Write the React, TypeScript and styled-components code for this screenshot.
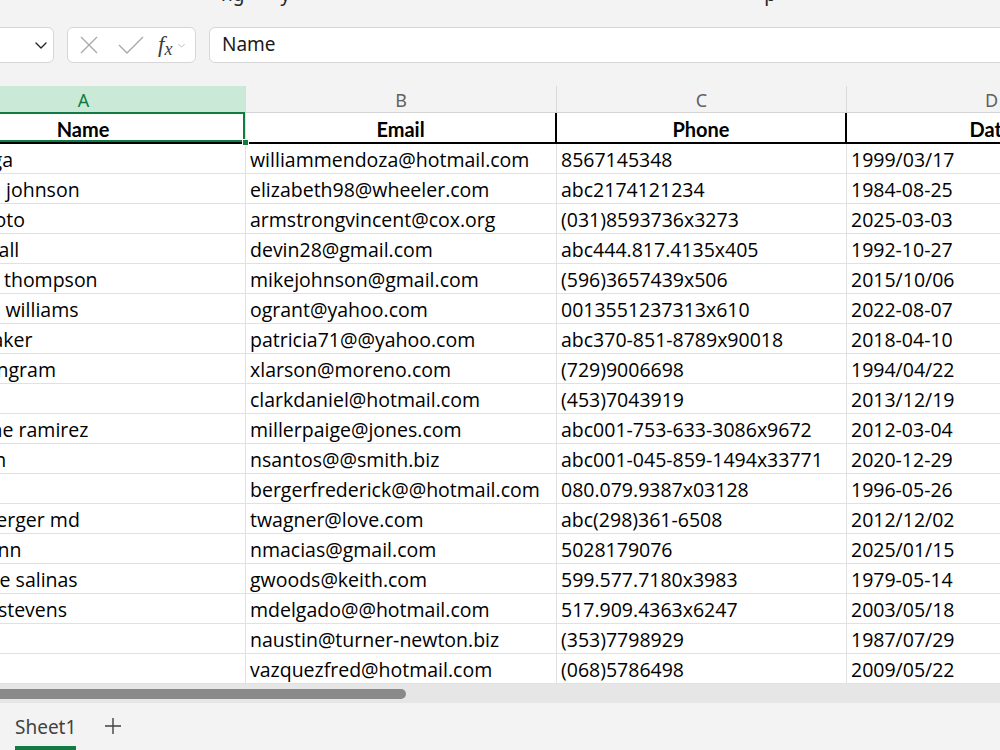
import React from 'react'
import styled, { createGlobalStyle } from 'styled-components'

const GlobalStyle = createGlobalStyle`
  * { box-sizing: border-box; }
  html, body { margin: 0; padding: 0; background: #f3f3f3; overflow: hidden; }
  #root { width: 1000px; height: 750px; }
`

const COLS = '324px 311px 290px 290px'

const Page = styled.div`
  width: 1000px;
  height: 750px;
  display: flex;
  flex-direction: column;
  background: #f3f3f3;
  overflow: hidden;
`

// message line above the view, only its descenders remain visible
const TopStrip = styled.div`
  height: 27px;
  overflow: hidden;
  display: flex;
  align-items: flex-start;
  font-family: 'Noto Sans', sans-serif;
  font-size: 19px;
  color: #242424;
`

const Fragment = styled.span<{ $gap: number }>`
  margin-left: ${p => p.$gap}px;
  margin-top: -16px;
  line-height: 20px;
  white-space: nowrap;
`

const FormulaBar = styled.div`
  height: 36px;
  display: flex;
  gap: 13px;
  margin-bottom: 23px;
`

const NameBox = styled.div`
  width: 120px;
  margin-left: -66px;
  border: 1px solid #d6d6d6;
  border-radius: 6px;
  background: #fff;
  display: flex;
  align-items: center;
  justify-content: flex-end;
  padding-right: 4px;
`

const FxGroup = styled.div`
  width: 129px;
  border: 1px solid #d6d6d6;
  border-radius: 6px;
  background: #fff;
  display: flex;
  align-items: center;
  padding-left: 11px;
`

const FxLabel = styled.span`
  font-family: 'Liberation Serif', serif;
  font-style: italic;
  font-size: 23px;
  color: #3b3b3b;
  margin-left: 13px;
  line-height: 1;
  sub {
    font-size: 18px;
    vertical-align: -3px;
  }
`

const FxCaret = styled.span`
  display: flex;
  margin-left: 5px;
`

const FormulaInput = styled.div`
  flex: 1;
  margin-right: -20px;
  border: 1px solid #d6d6d6;
  border-radius: 6px;
  background: #fff;
  display: flex;
  align-items: center;
  padding: 0 0 2px 12px;
  font-family: 'Noto Sans', sans-serif;
  font-size: 19px;
  color: #1b1b1b;
`

const Sheet = styled.div`
  height: 598px;
  overflow: hidden;
  background: #fff;
`

const ColHeaderRow = styled.div`
  display: grid;
  grid-template-columns: ${COLS};
  margin-left: -78px;
  height: 27px;
  border-bottom: 1px solid #d4d4d4;
  background: #f3f3f3;
`

const ColHead = styled.div<{ $active?: boolean }>`
  display: flex;
  align-items: center;
  justify-content: center;
  border-right: 1px solid #dadada;
  background: ${p => (p.$active ? '#caead7' : '#f3f3f3')};
  color: ${p => (p.$active ? '#107c41' : '#616161')};
  font-family: 'Noto Sans', sans-serif;
  font-size: 18px;
  padding-top: 1px;
`

const Row = styled.div<{ $head?: boolean }>`
  display: grid;
  grid-template-columns: ${COLS};
  margin-left: -78px;
  height: ${p => (p.$head ? 31 : 30)}px;
`

const Cell = styled.div`
  display: flex;
  align-items: center;
  padding: 1px 4px 0;
  border-right: 1px solid #e1e1e1;
  border-bottom: 1px solid #e1e1e1;
  font-family: 'Open Sans', sans-serif;
  font-size: 19.5px;
  color: #000;
  white-space: nowrap;
  overflow: hidden;
`

const HeadCell = styled(Cell)`
  justify-content: center;
  padding-top: 3px;
  font-family: Lato, 'Open Sans', sans-serif;
  font-weight: 700;
  font-size: 20px;
  border-right: 2px solid #000;
  border-bottom: 2px solid #000;
  overflow: visible;
`

const SelectedCell = styled(HeadCell)`
  position: relative;
  border-right: 2px solid #e1e1e1;
  &::after {
    content: '';
    position: absolute;
    top: -1px;
    left: -2px;
    right: -1px;
    bottom: 0;
    border: 2px solid #107c41;
    pointer-events: none;
  }
`

const FillHandle = styled.span`
  position: absolute;
  right: -5px;
  bottom: -4px;
  width: 7px;
  height: 7px;
  background: #107c41;
  border: 1px solid #fff;
  z-index: 2;
`

const ScrollTrack = styled.div`
  height: 19px;
  background: #e6e6e6;
  padding-top: 5px;
`

const ScrollThumb = styled.div`
  width: 406px;
  height: 10px;
  border-radius: 0 5px 5px 0;
  background: #898989;
`

const TabBar = styled.div`
  flex: 1;
  display: flex;
  align-items: stretch;
  padding-left: 15px;
  gap: 28px;
`

const Tab = styled.div`
  display: flex;
  align-items: center;
  padding-top: 4px;
  border-bottom: 4px solid #107c41;
  font-family: 'Noto Sans', sans-serif;
  font-size: 19px;
  color: #424242;
`

const AddButton = styled.div`
  display: flex;
  align-items: center;
  padding-bottom: 1px;
`

const people = [
  ['rosa vega', 'williammendoza@hotmail.com', '8567145348', '1999/03/17'],
  ['kenneth johnson', 'elizabeth98@wheeler.com', 'abc2174121234', '1984-08-25'],
  ['carlos soto', 'armstrongvincent@cox.org', '(031)8593736x3273', '2025-03-03'],
  ['daniel hall', 'devin28@gmail.com', 'abc444.817.4135x405', '1992-10-27'],
  ['vanessa thompson', 'mikejohnson@gmail.com', '(596)3657439x506', '2015/10/06'],
  ['amanda williams', 'ogrant@yahoo.com', '0013551237313x610', '2022-08-07'],
  ['dylan baker', 'patricia71@@yahoo.com', 'abc370-851-8789x90018', '2018-04-10'],
  ['norma ingram', 'xlarson@moreno.com', '(729)9006698', '1994/04/22'],
  ['amy lee', 'clarkdaniel@hotmail.com', '(453)7043919', '2013/12/19'],
  ['marianne ramirez', 'millerpaige@jones.com', 'abc001-753-633-3086x9672', '2012-03-04'],
  ['eva allen', 'nsantos@@smith.biz', 'abc001-045-859-1494x33771', '2020-12-29'],
  ['lisa ray', 'bergerfrederick@@hotmail.com', '080.079.9387x03128', '1996-05-26'],
  ['susan berger md', 'twagner@love.com', 'abc(298)361-6508', '2012/12/02'],
  ['julie quinn', 'nmacias@gmail.com', '5028179076', '2025/01/15'],
  ['madeline salinas', 'gwoods@keith.com', '599.577.7180x3983', '1979-05-14'],
  ['monica stevens', 'mdelgado@@hotmail.com', '517.909.4363x6247', '2003/05/18'],
  ['eric fox', 'naustin@turner-newton.biz', '(353)7798929', '1987/07/29'],
  ['tom hill', 'vazquezfred@hotmail.com', '(068)5786498', '2009/05/22'],
]

const Chevron = ({ size, color }: { size: number; color: string }) => (
  <svg width={size} height={size} viewBox="0 0 16 16" fill="none">
    <path d="M3 6l5 5 5-5" stroke={color} strokeWidth="1.4" strokeLinecap="round" strokeLinejoin="round" />
  </svg>
)

export default function App() {
  return (
    <>
      <GlobalStyle />
      <Page>
        <TopStrip>
          <Fragment $gap={221}>ng</Fragment>
          <Fragment $gap={36}>y</Fragment>
          <Fragment $gap={474}>p</Fragment>
        </TopStrip>

        <FormulaBar>
          <NameBox>
            <Chevron size={16} color="#242424" />
          </NameBox>
          <FxGroup>
            <svg width="20" height="20" viewBox="0 0 20 20" fill="none">
              <path d="M2 2l16 16M18 2L2 18" stroke="#a8a8a8" strokeWidth="1.3" />
            </svg>
            <svg width="28" height="20" viewBox="0 0 28 20" fill="none" style={{ marginLeft: 18 }}>
              <path d="M2 10l8 8L26 2" stroke="#a8a8a8" strokeWidth="1.3" />
            </svg>
            <FxLabel>
              f<sub>x</sub>
            </FxLabel>
            <FxCaret>
              <Chevron size={9} color="#a8a8a8" />
            </FxCaret>
          </FxGroup>
          <FormulaInput>Name</FormulaInput>
        </FormulaBar>

        <Sheet>
          <ColHeaderRow>
            <ColHead $active>A</ColHead>
            <ColHead>B</ColHead>
            <ColHead>C</ColHead>
            <ColHead>D</ColHead>
          </ColHeaderRow>
          <Row $head>
            <SelectedCell>
              Name
              <FillHandle />
            </SelectedCell>
            <HeadCell>Email</HeadCell>
            <HeadCell>Phone</HeadCell>
            <HeadCell>Date</HeadCell>
          </Row>
          {people.map(p => (
            <Row key={p[1]}>
              {p.map((v, i) => (
                <Cell key={i}>{v}</Cell>
              ))}
            </Row>
          ))}
        </Sheet>

        <ScrollTrack>
          <ScrollThumb />
        </ScrollTrack>

        <TabBar>
          <Tab>Sheet1</Tab>
          <AddButton>
            <svg width="18" height="18" viewBox="0 0 18 18" fill="none">
              <path d="M9 1v16M1 9h16" stroke="#424242" strokeWidth="1.4" />
            </svg>
          </AddButton>
        </TabBar>
      </Page>
    </>
  )
}
